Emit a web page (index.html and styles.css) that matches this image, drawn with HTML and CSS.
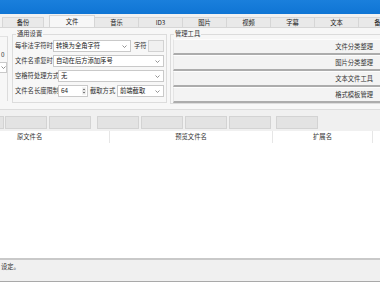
FILE: index.html
```html
<!DOCTYPE html>
<html lang="zh-CN">
<head>
<meta charset="utf-8">
<title>重命名工具</title>
<link rel="stylesheet" href="styles.css">
</head>
<body>
<div class="app">
  <div class="titlebar"></div>
  <div class="tabs">
    <div class="tab first">备份</div>
    <div class="tab active">文件</div>
    <div class="tab">音乐</div>
    <div class="tab">ID3</div>
    <div class="tab">图片</div>
    <div class="tab">视频</div>
    <div class="tab">字幕</div>
    <div class="tab">文本</div>
    <div class="tab">备份</div>
  </div>
  <div class="page">
    <div class="cut">
      <div class="cut-label">0</div>
      <div class="cut-combo"><svg class="chev" width="5" height="3" viewBox="0 0 5 3"><polyline points="0.5,0.5 2.5,2.5 4.5,0.5" fill="none" stroke="#777" stroke-width="0.8"/></svg></div>
    </div>
    <fieldset class="group general">
      <legend>通用设置</legend>
      <div class="rows">
        <div class="row">
          <span class="lbl w37">每非法字符时</span>
          <div class="combo w78"><span>转换为全角字符</span><svg class="chev" width="5" height="3" viewBox="0 0 5 3"><polyline points="0.5,0.5 2.5,2.5 4.5,0.5" fill="none" stroke="#777" stroke-width="0.8"/></svg></div>
          <span class="lbl unit">字符</span>
          <div class="textbox disabled"></div>
        </div>
        <div class="row">
          <span class="lbl w37">文件名重复时</span>
          <div class="combo w111"><span>自动在后方添加序号</span><svg class="chev" width="5" height="3" viewBox="0 0 5 3"><polyline points="0.5,0.5 2.5,2.5 4.5,0.5" fill="none" stroke="#777" stroke-width="0.8"/></svg></div>
        </div>
        <div class="row">
          <span class="lbl w42">空格符处理方式</span>
          <div class="combo w106"><span>无</span><svg class="chev" width="5" height="3" viewBox="0 0 5 3"><polyline points="0.5,0.5 2.5,2.5 4.5,0.5" fill="none" stroke="#777" stroke-width="0.8"/></svg></div>
        </div>
        <div class="row">
          <span class="lbl w42">文件名长度限制</span>
          <div class="spin"><span>64</span><svg class="spin-arrows" width="4" height="8" viewBox="0 0 4 8"><rect x="0" y="0" width="4" height="8" fill="#f3f3f3"/><polygon points="0.8,3 2,1.5 3.2,3" fill="#555"/><polygon points="0.8,5 2,6.5 3.2,5" fill="#555"/><line x1="0" y1="4" x2="4" y2="4" stroke="#bbb" stroke-width="0.5"/></svg></div>
          <span class="lbl cut-mode">截取方式</span>
          <div class="combo w47"><span>前端截取</span><svg class="chev" width="5" height="3" viewBox="0 0 5 3"><polyline points="0.5,0.5 2.5,2.5 4.5,0.5" fill="none" stroke="#777" stroke-width="0.8"/></svg></div>
        </div>
      </div>
    </fieldset>
    <fieldset class="group tools">
      <legend>管理工具</legend>
      <div class="tool-btn">文件分类整理</div>
      <div class="tool-btn">图片分类整理</div>
      <div class="tool-btn">文本文件工具</div>
      <div class="tool-btn">格式模板管理</div>
    </fieldset>
  </div>
  <div class="toolbar">
    <div class="tb-box stub"></div>
    <div class="tb-box"></div>
    <div class="tb-box"></div>
    <div class="tb-box gap"></div>
    <div class="tb-box"></div>
    <div class="tb-box"></div>
    <div class="tb-box"></div>
    <div class="tb-box gap2"></div>
  </div>
  <div class="list">
    <div class="list-head">
      <div class="col c1">原文件名</div>
      <div class="col c2">预览文件名</div>
      <div class="col c3">扩展名</div>
      <div class="col c4"></div>
    </div>
    <div class="list-body"></div>
  </div>
  <div class="status">设定。</div>
</div>
</body>
</html>
```
FILE: styles.css
```css
* { box-sizing: border-box; }
html, body { margin: 0; padding: 0; }
body {
  width: 380px;
  height: 282px;
  overflow: hidden;
  background: #fff;
  color: #222;
  font-family: "Noto Sans CJK SC", "Noto Sans", sans-serif;
  font-size: 6.3px;
  line-height: 8px;
}
.app { display: flex; flex-direction: column; height: 282px; width: 380px; overflow: hidden; }

.titlebar { flex: none; height: 14px; background: linear-gradient(#1a7fdc, #0f75d4); }

.tabs {
  flex: none;
  height: 14px;
  display: flex;
  align-items: flex-end;
  background: #f1f1f1;
  border-bottom: 1px solid #d6d6d6;
  white-space: nowrap;
  overflow: hidden;
}
.tab {
  flex: none;
  width: 44px;
  height: 10px;
  display: flex;
  align-items: center;
  justify-content: center;
  background: #e9e9e9;
  border-top: 1px solid #d6d6d6;
  border-right: 1px solid #d6d6d6;
}
.tab.first { width: 42px; margin-left: 2px; margin-right: 5px; border-left: 1px solid #d6d6d6; }
.tab.active {
  width: 46px;
  height: 13px;
  margin-bottom: -1px;
  background: #f7f7f7;
  border-left: 1px solid #d6d6d6;
  padding-bottom: 1px;
}

.page {
  flex: none;
  height: 82px;
  background: #f7f7f7;
  display: flex;
  align-items: flex-start;
  padding-top: 2px;
  border-bottom: 1px solid #dcdcdc;
  overflow: hidden;
}

.cut {
  flex: none;
  width: 8px;
  height: 65px;
  margin-top: 6px;
  border-right: 1px solid #dcdcdc;
  border-top: 1px solid #e2e2e2;
  padding-top: 14px;
}
.cut-label { padding-left: 1px; color: #333; }
.cut-combo {
  margin-top: 3px;
  height: 11px;
  width: 7px;
  background: #fff;
  border: 1px solid #c9c9c9;
  border-left: none;
  display: flex;
  align-items: center;
  padding-left: 1px;
}

.group {
  flex: none;
  margin: 0;
  min-width: 0;
  border: 1px solid #dcdcdc;
}
.group legend {
  padding: 0 1px;
  margin-left: 1px;
  line-height: 8px;
  color: #333;
}
.general {
  width: 155px;
  height: 73px;
  margin-left: 4px;
  padding: 2px 2px 0 2px;
}
.tools {
  width: 215px;
  height: 74px;
  margin-left: 3px;
  padding: 1px 0 0 2px;
}

.rows { display: flex; flex-direction: column; gap: 3px; }
.row { display: flex; align-items: center; height: 12px; }
.lbl { flex: none; white-space: nowrap; color: #333; }
.w37 { width: 37px; }
.w42 { width: 42px; }
.unit { width: 13px; margin-left: 3px; }
.cut-mode { width: 26px; margin-left: 2px; }

.combo {
  flex: none;
  height: 12px;
  margin-left: 1px;
  background: #fff;
  border: 1px solid #c9c9c9;
  display: flex;
  align-items: center;
  justify-content: space-between;
  padding: 0 3px 0 2px;
  white-space: nowrap;
  overflow: hidden;
}
.w78 { width: 78px; }
.w111 { width: 111px; }
.w106 { width: 106px; }
.w47 { width: 47px; }
.chev { flex: none; display: block; }

.textbox {
  flex: none;
  width: 16px;
  height: 12px;
  margin-left: 1px;
  border: 1px solid #d2d2d2;
}
.textbox.disabled { background: #f0f0f0; }

.spin {
  flex: none;
  width: 30px;
  height: 12px;
  margin-left: 1px;
  background: #fff;
  border: 1px solid #c9c9c9;
  display: flex;
  align-items: center;
  justify-content: space-between;
  padding-left: 2px;
  padding-right: 1px;
}
.spin-arrows { display: block; }

.tool-btn {
  height: 16px;
  display: flex;
  align-items: center;
  justify-content: flex-end;
  padding-right: 11px;
  background: #f3f3f3;
  border-top: 1px solid #fdfdfd;
  border-left: 1px solid #e4e4e4;
  border-bottom: 2px solid #acacac;
  white-space: nowrap;
  color: #333;
}

.toolbar {
  flex: none;
  height: 21px;
  background: #f0f0f0;
  display: flex;
  align-items: flex-start;
  padding-top: 6px;
}
.tb-box {
  flex: none;
  width: 42px;
  height: 13px;
  margin-left: 2px;
  background: #e3e3e3;
  border: 1px solid #d3d3d3;
}
.tb-box.stub { width: 4px; margin-left: 0; border-left: none; }
.tb-box.stub + .tb-box { margin-left: 1px; }
.tb-box.gap { margin-left: 6px; }
.tb-box.gap2 { margin-left: 5px; }

.list { flex: 1; display: flex; flex-direction: column; background: #fff; }
.list-head { flex: none; height: 12px; display: flex; background: #fff; }
.col {
  flex: none;
  height: 12px;
  display: flex;
  align-items: center;
  border-right: 1px solid #e6e6e6;
  color: #333;
  white-space: nowrap;
}
.c1 { width: 110px; padding-left: 17px; }
.c2 { width: 163px; justify-content: center; }
.c3 { width: 100px; justify-content: center; }
.c4 { flex: 1; border-right: none; }
.list-body { flex: 1; }

.status {
  flex: none;
  height: 24px;
  background: #f0f0f0;
  border-top: 2px solid #c9c9c9;
  border-bottom: 1px solid #a9a9a9;
  padding-top: 3px;
  padding-left: 1px;
  color: #333;
}
```
